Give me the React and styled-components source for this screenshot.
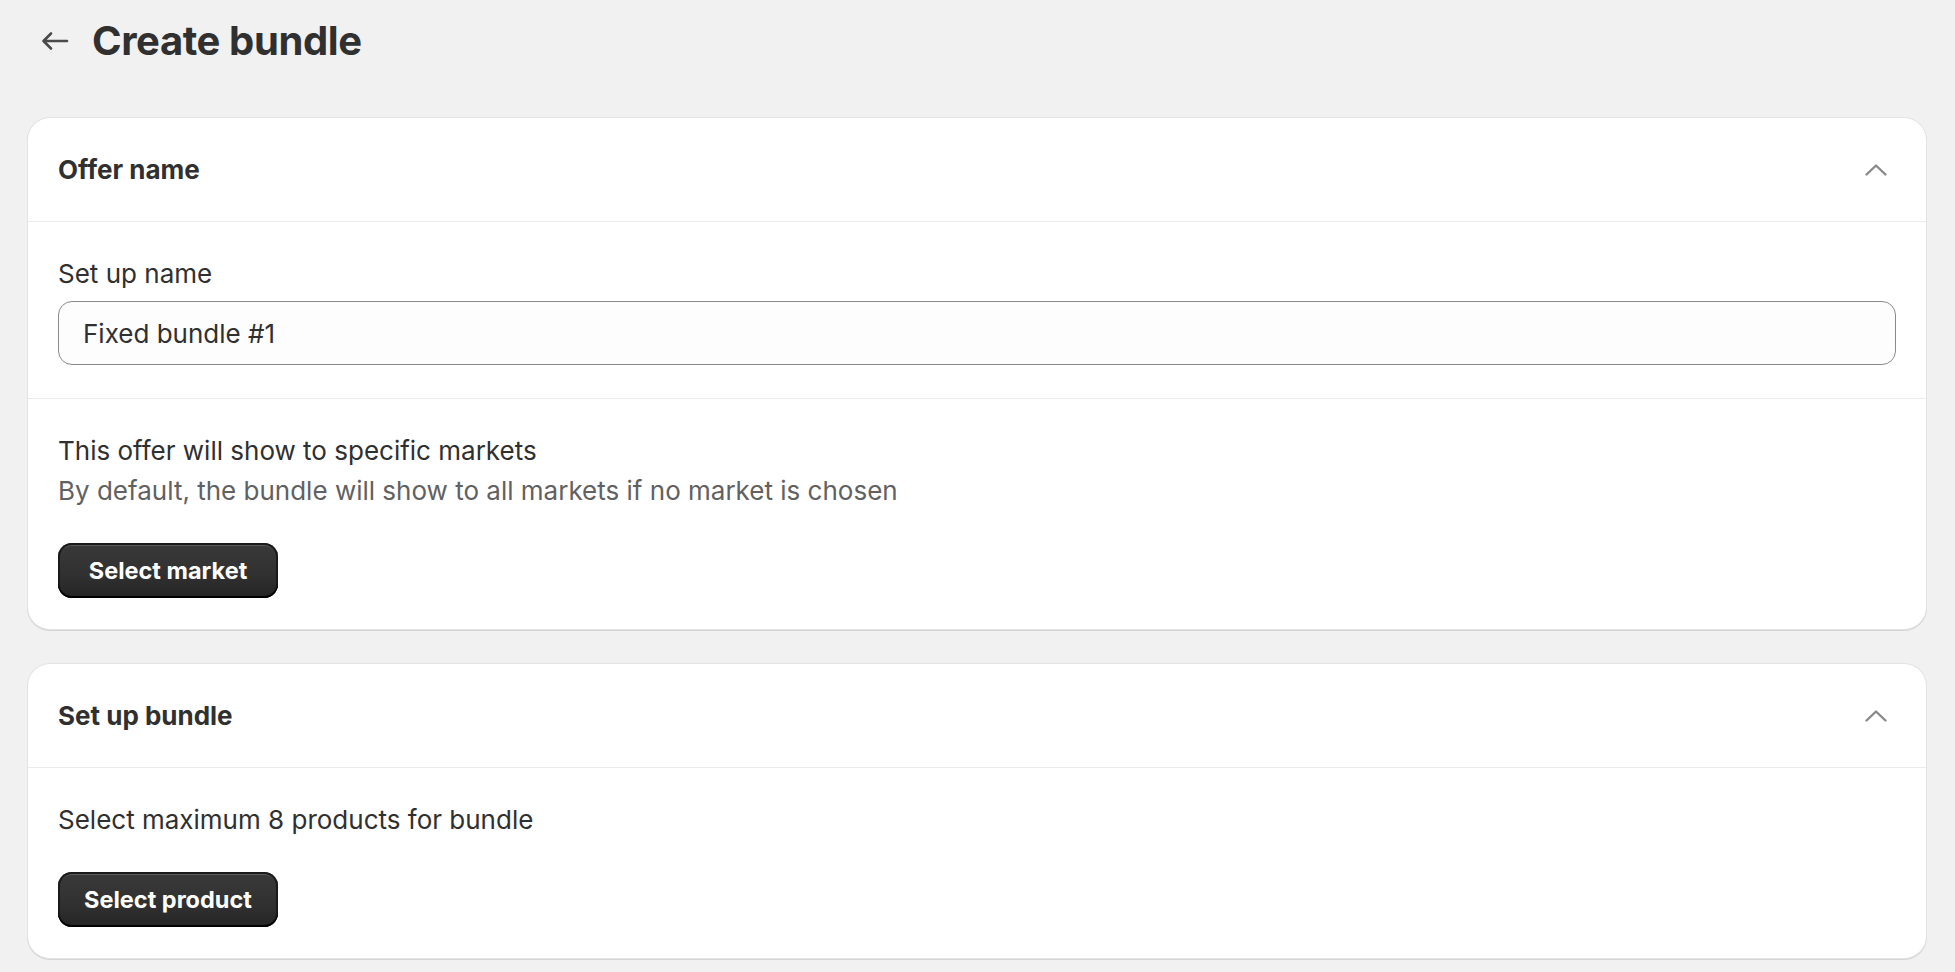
import React from "react";
import styled, { createGlobalStyle } from "styled-components";

const GlobalStyle = createGlobalStyle`
  html, body {
    margin: 0;
    padding: 0;
    background: #f1f1f1;
    font-family: Inter, "Noto Sans", "Liberation Sans", sans-serif;
    color: #303030;
    -webkit-font-smoothing: antialiased;
  }
  * { box-sizing: border-box; }
`;

const Page = styled.div`
  padding: 0 29px 14px 28px;
  display: flex;
  flex-direction: column;
  gap: 35px;
`;

const TitleBar = styled.header`
  height: 83px;
  display: flex;
  align-items: center;
  gap: 22px;
  padding-left: 12px;
  padding-bottom: 1px;
`;

const BackButton = styled.button`
  all: unset;
  display: flex;
  align-items: center;
  justify-content: center;
  width: 30px;
  height: 30px;
  color: #4a4a4a;
  cursor: pointer;
`;

const PageTitle = styled.h1`
  margin: 0;
  font-size: 40px;
  line-height: 48px;
  font-weight: 700;
  letter-spacing: -0.4px;
  color: #303030;
`;

const Card = styled.section`
  background: #fff;
  border-radius: 22px;
  box-shadow: 0 0 0 1px #e3e3e3, 0 1px 0 1px #d4d4d4;
  overflow: hidden;
`;

const CardHeader = styled.div`
  display: flex;
  align-items: center;
  justify-content: space-between;
  padding: 32px 38px 31px 30px;
  border-bottom: 1px solid #ebebeb;
`;

const CardTitle = styled.h2`
  margin: 0;
  font-size: 26px;
  line-height: 40px;
  font-weight: 650;
  color: #303030;
`;

const Toggle = styled.button`
  all: unset;
  display: flex;
  color: #8a8a8a;
  cursor: pointer;
`;

const Section = styled.div`
  padding: 32px 30px ${(p) => (p.$tight ? "31px" : "33px")};
  display: flex;
  flex-direction: column;
  border-top: ${(p) => (p.$divided ? "1px solid #ebebeb" : "none")};
`;

const Label = styled.label`
  font-size: 26px;
  line-height: 40px;
  color: #303030;
  margin-bottom: 7px;
`;

const Input = styled.input`
  height: 64px;
  border: 1.5px solid #8a8a8a;
  border-radius: 14px;
  background: #fdfdfd;
  padding: 0 24px;
  font-family: inherit;
  font-size: 26px;
  color: #303030;
  outline: none;
`;

const Text = styled.p`
  margin: 0;
  font-size: 26px;
  line-height: 40px;
  color: ${(p) => (p.$subdued ? "#616161" : "#303030")};
`;

const Actions = styled.div`
  margin-top: 32px;
  display: flex;
`;

const PrimaryButton = styled.button`
  min-width: 220px;
  height: 55px;
  padding: 0 24px;
  border-radius: 14px;
  border: none;
  background: linear-gradient(180deg, #3a3a3a 0%, #303030 60%, #252525 100%);
  box-shadow: inset 0 -2px 0 0 #000, inset 0 0 0 2px #1a1a1a, inset 0 3px 0 0 rgba(255,255,255,0.18);
  color: #fff;
  font-family: inherit;
  font-size: 23.5px;
  font-weight: 650;
  cursor: pointer;
`;

const ArrowLeft = () => (
  <svg width="28" height="20" viewBox="0 0 28 20" fill="none">
    <path d="M26 10H3M10 2.5L2.5 10L10 17.5" stroke="currentColor" strokeWidth="2.6" strokeLinecap="round" strokeLinejoin="round" />
  </svg>
);

const ChevronUp = () => (
  <svg width="24" height="14" viewBox="0 0 24 14" fill="none">
    <path d="M2.5 11.5L12 2.5L21.5 11.5" stroke="currentColor" strokeWidth="2.4" strokeLinecap="round" strokeLinejoin="round" />
  </svg>
);

export default function App() {
  return (
    <>
      <GlobalStyle />
      <Page>
        <TitleBar>
          <BackButton aria-label="Back">
            <ArrowLeft />
          </BackButton>
          <PageTitle>Create bundle</PageTitle>
        </TitleBar>

        <Card>
          <CardHeader>
            <CardTitle>Offer name</CardTitle>
            <Toggle aria-label="Collapse"><ChevronUp /></Toggle>
          </CardHeader>
          <Section>
            <Label htmlFor="name">Set up name</Label>
            <Input id="name" defaultValue="Fixed bundle #1" />
          </Section>
          <Section $divided $tight>
            <Text>This offer will show to specific markets</Text>
            <Text $subdued>By default, the bundle will show to all markets if no market is chosen</Text>
            <Actions>
              <PrimaryButton>Select market</PrimaryButton>
            </Actions>
          </Section>
        </Card>

        <Card>
          <CardHeader>
            <CardTitle>Set up bundle</CardTitle>
            <Toggle aria-label="Collapse"><ChevronUp /></Toggle>
          </CardHeader>
          <Section $tight>
            <Text>Select maximum 8 products for bundle</Text>
            <Actions>
              <PrimaryButton>Select product</PrimaryButton>
            </Actions>
          </Section>
        </Card>
      </Page>
    </>
  );
}
